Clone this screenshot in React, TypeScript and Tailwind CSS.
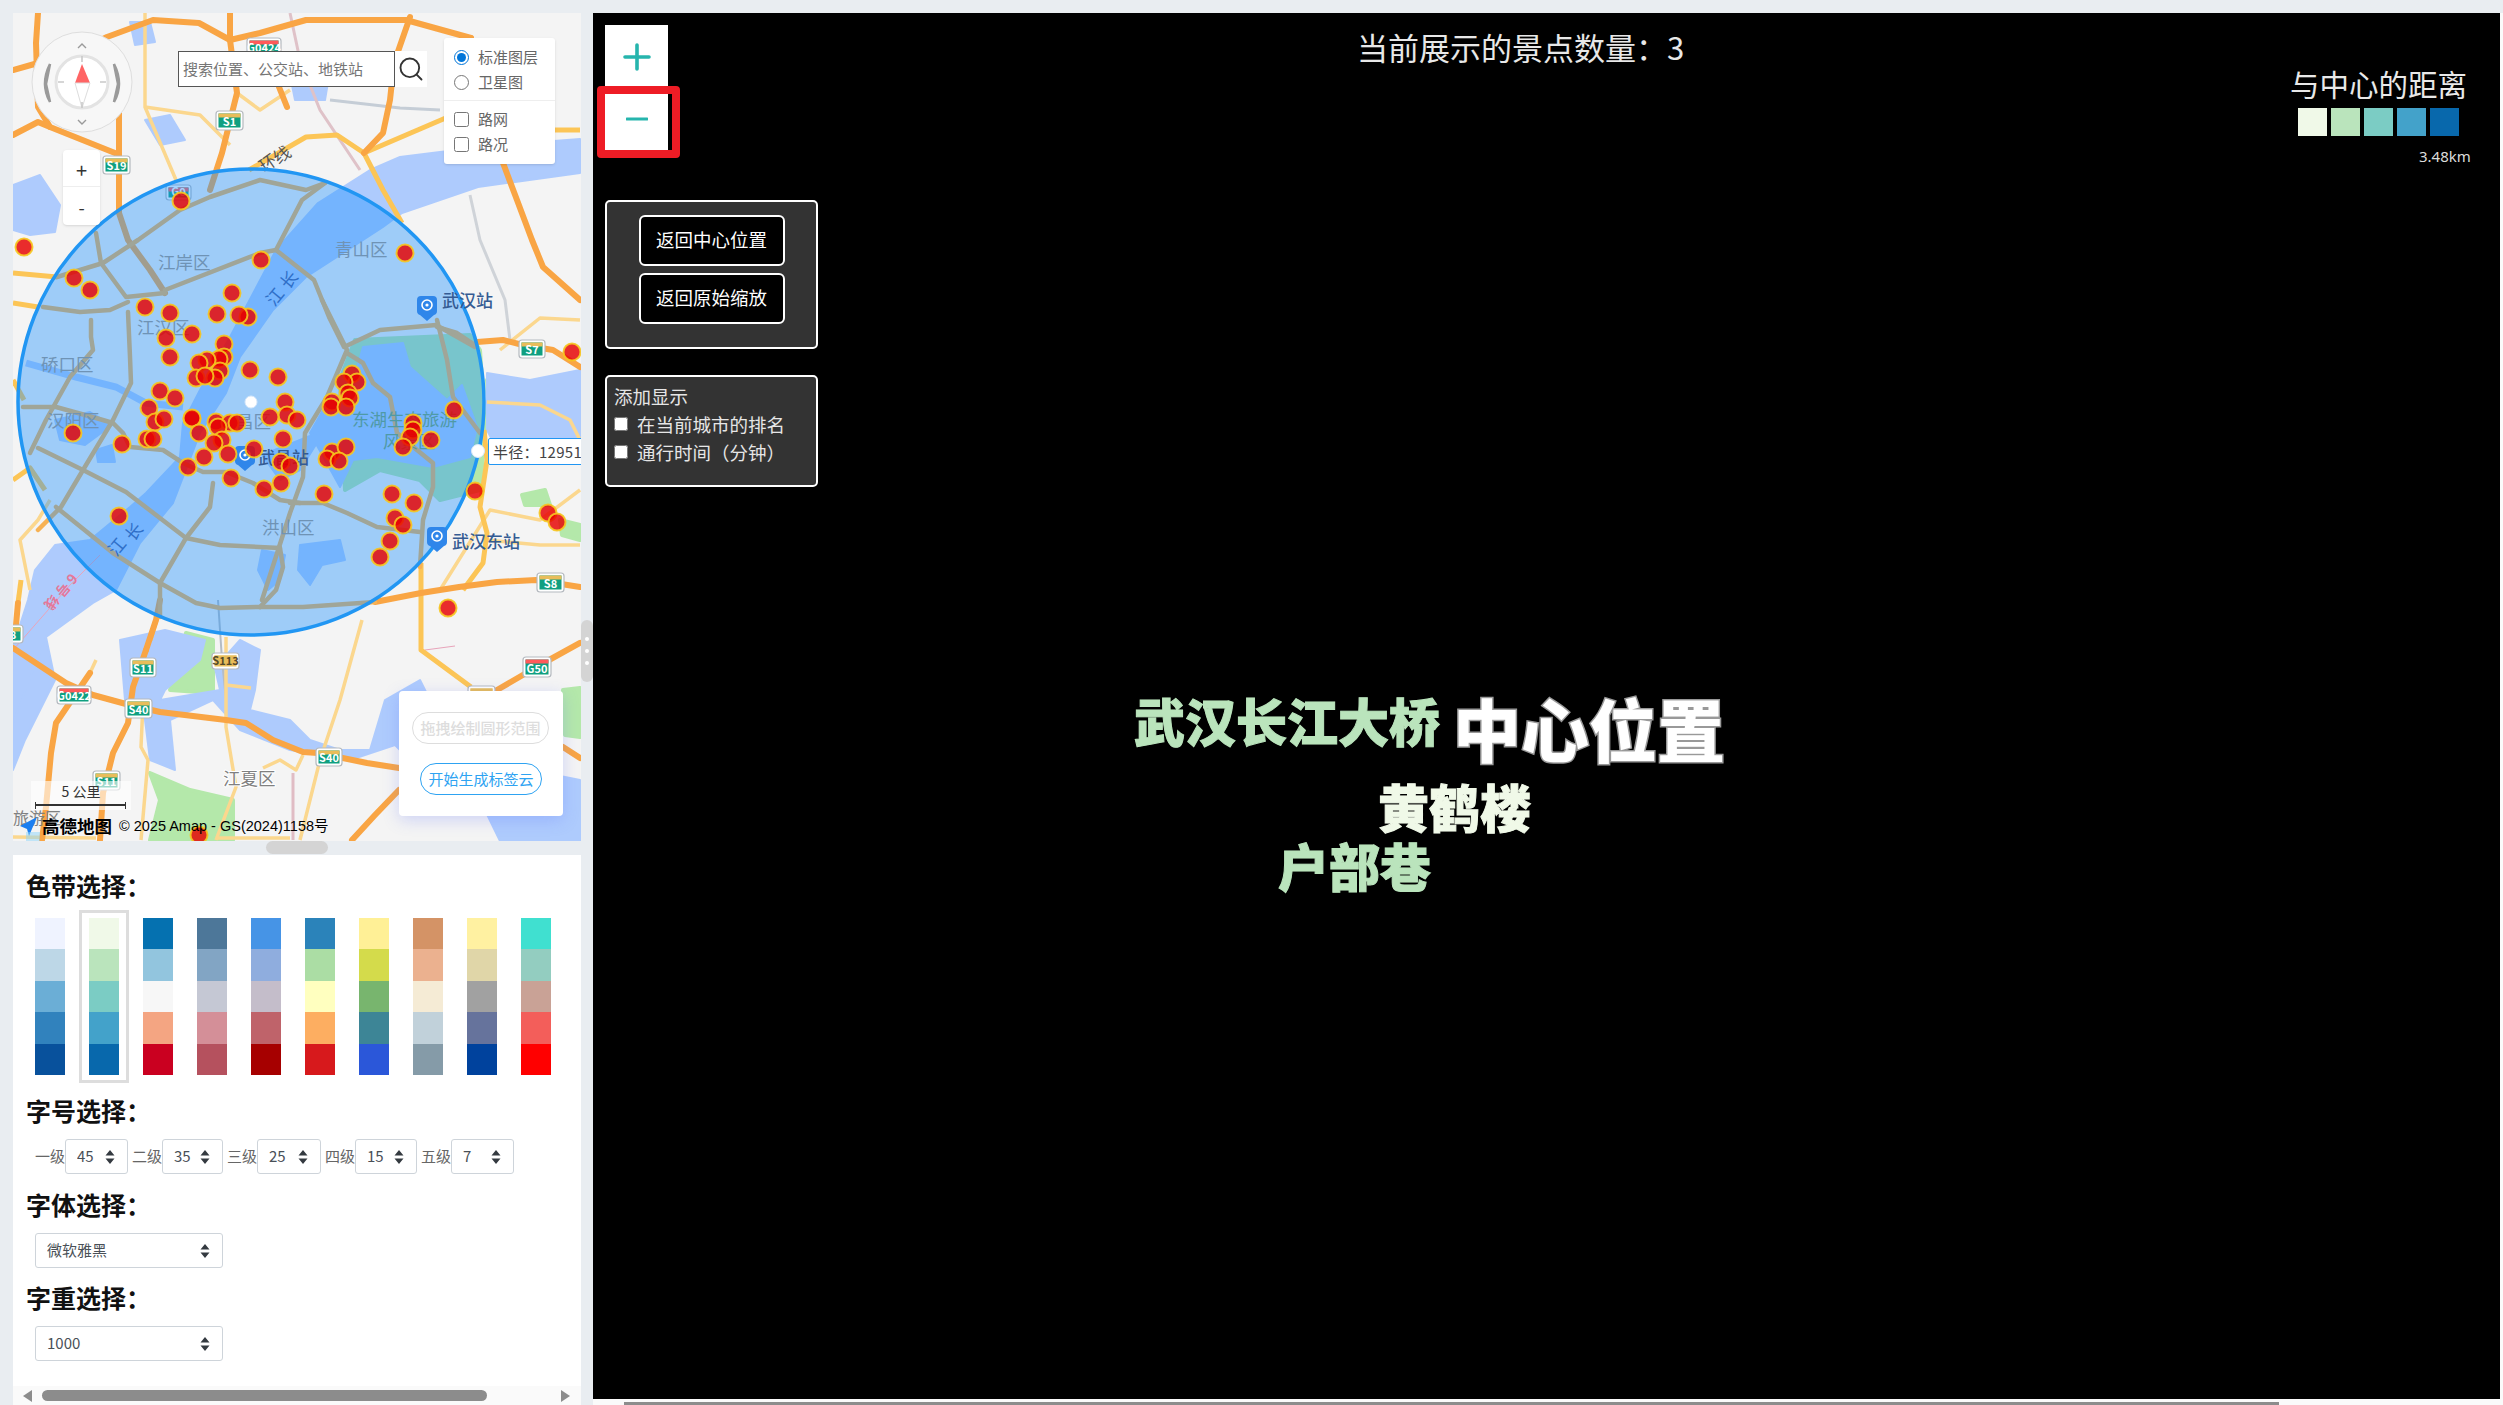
import { Search } from "lucide-react";

const highways = [
  "13,70 38,63 60,56",
  "38,13 36,43 38,107 50,127 115,153",
  "13,135 38,122 50,127",
  "60,60 107,37 153,20 199,23 230,40 260,33 306,20 406,20 471,38",
  "119,100 119,213 128,240 150,270 165,293",
  "230,13 230,40 237,93 222,153 210,190",
  "410,17 394,63 390,100 383,133 364,153",
  "279,87 287,107",
  "471,38 497,147 517,200 532,240 543,267 580,300",
  "477,342 503,340 523,345 553,350 580,367",
  "375,602 421,593 459,587 497,582 536,580 580,587",
  "497,690 540,665 580,643",
  "563,747 580,758",
  "13,648 66,683 93,695 126,704 160,712 226,720 246,723 273,740 303,752 318,753 367,763 399,768",
  "90,673 56,723 51,753 46,807 42,840",
  "146,650 156,620 160,600",
  "146,650 133,687 128,723 113,753 103,793 100,840",
  "18,603 16,625",
  "399,790 375,815 352,840",
];

// ring roads, seen through the radius circle
const cityRoads = [
  "57,277 103,263 138,240 180,210 210,197 260,180 306,190 325,183",
  "165,290 260,253 276,250 314,280 329,317 344,347 380,330 436,325 475,347",
  "276,250 302,200 325,183",
  "96,233 101,263 126,297 165,293",
  "43,307 80,312 110,310 128,302",
  "128,312 130,357 131,383 113,420 83,470 61,507 38,530",
  "23,407 56,407 96,418 113,423 123,433 130,447 163,450 183,463 203,472 226,472 253,483 280,500 300,503",
  "38,448 83,470 126,492 186,538 220,545 280,548",
  "56,507 113,553 160,583 196,603 220,608 256,607 303,607 375,602",
  "213,483 210,507 186,538 160,583 160,617",
  "280,548 283,567 276,590 260,607",
  "91,320 91,337 93,350 70,377 46,420 30,453",
  "347,353 363,363 373,383 390,397 397,433 417,450 433,463 433,487 423,520 420,567",
  "290,503 323,503 347,513 377,527 420,532",
  "437,320 447,360 453,397 480,433",
  "437,327 457,333 475,345",
  "322,300 347,350 327,397 305,433 303,477 290,513 262,600",
];

const yellows = [
  "249,170 306,137 337,135 364,153 383,190 402,223",
  "364,153 448,117 520,130 580,130",
  "13,273 57,277",
  "13,303 38,307",
  "484,430 487,460 480,507 487,533 483,563 463,590",
  "421,563 421,650 471,687",
  "21,580 18,603",
  "156,620 150,640",
  "13,380 24,400",
  "13,480 30,468 45,490",
];

const pales = [
  "145,13 145,107 176,180",
  "145,107 200,115 230,145",
  "237,93 260,110 290,90",
  "90,673 96,660",
  "143,703 141,747 148,760 141,840",
  "226,637 226,727 236,787 216,840",
  "226,685 251,688",
  "303,755 296,770 280,760 263,768",
  "13,837 96,838",
  "216,838 290,838",
  "500,350 540,318 580,320",
  "487,402 540,405 570,420 580,440",
  "440,590 490,510 540,520 580,490",
  "487,540 540,545 580,545",
  "30,590 20,540 38,520 50,500",
  "362,620 340,700 320,760 300,840",
];

const waters = [
  // Yangtze, top right to bottom left
  "580,139 500,145 440,152 400,157 370,170 318,203 276,250 230,337 200,390 183,423 180,457 146,493 130,507 90,540 55,545 35,570 28,600 20,625 13,640 13,723 33,670 46,637 93,603 116,590 140,543 173,503 200,433 226,393 240,357 273,310 306,277 383,227 402,213 478,187 580,173",
  // East Lake
  "363,347 403,343 410,367 447,400 462,385 477,427 470,457 433,467 377,457 353,460 340,487 310,433 323,410 353,383",
  // south lakes
  "165,630 205,640 200,660 165,690 160,700 220,690 215,668 240,640 260,650 255,690 250,710 290,720 310,740 340,750 370,750 385,700 420,680 440,720 468,760 420,770 395,745 350,760 290,750 240,730 213,700 170,720 175,770 150,760 145,720 125,700 120,640",
  "13,723 33,670 46,637 55,680 25,740 13,770",
  "480,800 530,770 580,780 580,841 500,841",
  "300,545 340,540 345,560 322,565 310,585 298,570",
  "262,550 285,555 280,580 268,590 258,570",
  // upper lakes and ponds
  "13,185 40,175 60,205 55,232 30,235 13,230",
  "145,120 170,115 185,140 160,145",
  "130,22 150,22 155,42 135,45",
  "290,75 330,70 325,100 295,100",
  "55,420 90,412 112,425 85,445 60,440",
  "96,450 112,445 115,462 98,462",
  "300,440 325,430 300,470 280,480 262,455",
  "487,373 530,380 580,370 580,450 540,440 500,455 487,430",
];

const greens = [
  "355,340 470,335 480,350 485,430 480,490 440,500 420,480 380,470 345,490 340,380",
  "150,773 190,790 233,800 233,840 150,840 160,800",
  "186,633 213,640 213,693 170,690",
  "563,690 580,688 580,737 565,735",
  "487,380 517,385 520,420 490,430",
  "522,495 545,490 550,505 525,505",
  "560,520 580,525 580,540 562,535",
];

const markers = [
  [181,201],[24,247],[261,260],[405,253],[74,278],[90,290],[232,293],[145,307],[170,313],[217,314],[248,317],[239,315],
  [166,338],[192,334],[224,344],[170,357],[572,352],[224,357],[219,359],[207,360],[199,363],[220,371],[196,378],[215,378],[205,376],
  [250,370],[278,377],[352,374],[357,382],[344,382],[348,393],[350,398],[332,402],[331,407],[346,407],[454,410],
  [285,402],[287,415],[297,420],[270,417],[160,391],[175,398],[149,408],[155,422],[164,419],[192,419],[192,418],
  [216,422],[230,423],[218,427],[237,423],[413,423],[413,430],[73,433],[122,444],[147,439],[153,439],[199,433],[222,440],[214,443],
  [228,454],[204,457],[254,449],[283,439],[281,462],[290,466],[188,467],[231,478],[264,489],[281,483],[324,494],[332,452],[346,447],
  [327,459],[339,461],[410,437],[403,447],[431,440],[392,494],[414,503],[395,518],[403,525],[390,541],[380,557],[475,491],[119,516],
  [448,608],[548,513],[557,522],[199,835],
];

const grayLabels = [
  { t: "江岸区", x: 158, y: 263 }, { t: "青山区", x: 335, y: 250 }, { t: "江汉区", x: 137, y: 328 },
  { t: "硚口区", x: 41, y: 365 }, { t: "汉阳区", x: 47, y: 421 }, { t: "洪山区", x: 262, y: 528 },
];

const palettes = [
  ["#eff3ff", "#bdd7e7", "#6baed6", "#3182bd", "#08519c"],
  ["#f0f9e8", "#bae4bc", "#7bccc4", "#43a2ca", "#0868ac"],
  ["#0571b0", "#92c5de", "#f7f7f7", "#f4a582", "#ca0020"],
  ["#4d7799", "#82a5c4", "#c5c8d4", "#d48f98", "#b5515e"],
  ["#4694e6", "#8fadde", "#c4bdca", "#bf636a", "#a60000"],
  ["#2b83ba", "#abdda4", "#ffffbf", "#fdae61", "#d7191c"],
  ["#fff096", "#d4db4b", "#78b56e", "#3d8596", "#2b57d9"],
  ["#d49366", "#ebb18f", "#f5ebd5", "#c1d1da", "#859ba8"],
  ["#fff1a1", "#e0d6a8", "#a1a1a1", "#66739c", "#00429d"],
  ["#40e0d0", "#93cdc0", "#c9a296", "#f35e5a", "#ff0000"],
];

const legend = ["#f0f9e8", "#bae4bc", "#7bccc4", "#43a2ca", "#0868ac"];

const sizes = [
  { label: "一级", value: "45", cls: "w-[63px]" },
  { label: "二级", value: "35", cls: "w-[61px]" },
  { label: "三级", value: "25", cls: "w-[64px]" },
  { label: "四级", value: "15", cls: "w-[62px]" },
  { label: "五级", value: "7", cls: "w-[63px]" },
];

function Shield({ x, y, w, h, label, kind }: { x: number; y: number; w: number; h: number; label: string; kind: "s" | "g" | "y" }) {
  const band = kind === "g" ? "#ff5a5a" : "#e8bd5a";
  const body = kind === "y" ? "#e8bd5a" : "#0f9f80";
  return (
    <g>
      <rect x={x} y={y} width={w} height={h} rx={3} fill="#ffffff" stroke="#b4b9bf" strokeWidth={1.2} />
      <rect x={x + 2.5} y={y + 2.5} width={w - 5} height={h - 5} fill={body} />
      <rect x={x + 2.5} y={y + 2.5} width={w - 5} height={4} fill={band} />
      <text x={x + w / 2} y={y + h - 4.5} textAnchor="middle" fontSize={11} fontWeight={700} fill={kind === "y" ? "#554a2a" : "#ffffff"}>
        {label}
      </text>
    </g>
  );
}

function Pin({ x, y }: { x: number; y: number }) {
  return (
    <g transform={`translate(${x} ${y})`}>
      <path d="M-10,-7 Q-10,-11 -6,-11 L6,-11 Q10,-11 10,-7 L10,4 Q10,7 7,8 L0,14 L-7,8 Q-10,7 -10,4 Z" fill="#2f86ea" />
      <circle cx={0} cy={-2} r={5} fill="none" stroke="#ffffff" strokeWidth={1.6} />
      <circle cx={0} cy={-2} r={1.6} fill="#ffffff" />
    </g>
  );
}

function Compass() {
  return (
    <g>
      <circle cx={82} cy={82} r={50} fill="#f7f7f7" stroke="#dedede" />
      <circle cx={82} cy={82} r={26} fill="#ffffff" stroke="#e3e3e3" strokeWidth={3} />
      <path d="M82,64 L90,83 L75,83 Z" fill="#ff6464" />
      <path d="M82,108 L90,83 L75,83 Z" fill="#ffffff" stroke="#dddddd" />
      <path d="M50,64 Q40,84 50,102 L46,84 Z M114,64 Q124,84 114,102 L118,84 Z" fill="#9a9a9a" stroke="#9a9a9a" strokeWidth={2.5} />
      <path d="M78,48 L82,44 L86,48 M78,120 L82,124 L86,120" fill="none" stroke="#9a9a9a" strokeWidth={1.4} />
      <path d="M82,56 L82,62 M82,102 L82,108 M58,82 L64,82 M100,82 L106,82" stroke="#c9c9c9" strokeWidth={1.6} />
    </g>
  );
}

function MapDrawing() {
  return (
    <svg viewBox="13 13 568 828" width={568} height={828} className="block">
      <rect x={13} y={13} width={568} height={828} fill="#f4f4f4" />
      {greens.map((p) => (
        <polygon key={p} points={p} fill="#b4e8aa" stroke="#b4e8aa" strokeWidth={4} strokeLinejoin="round" />
      ))}
      {waters.map((p) => (
        <polygon key={p} points={p} fill="#aecbfd" stroke="#aecbfd" strokeWidth={2} strokeLinejoin="round" />
      ))}
      <polyline points="26,363 76,377 116,387 146,403 183,407" fill="none" stroke="#aecbfd" strokeWidth={7} />
      {/* rail and thin lines */}
      <polyline points="290,13 300,60 320,110 360,170" fill="none" stroke="#dfc2c8" strokeWidth={3} />
      <polyline points="330,100 400,108 440,110" fill="none" stroke="#c5cdd6" strokeWidth={3} />
      <polyline points="470,195 480,240 505,300 510,340" fill="none" stroke="#cfd3d8" strokeWidth={3} />
      <polyline points="218,600 222,660 226,700" fill="none" stroke="#b5bcc4" strokeWidth={2} />
      <polyline points="293,773 293,840" fill="none" stroke="#e0bcc4" strokeWidth={3} />
      <polyline points="13,650 70,585 100,555" fill="none" stroke="#e8a4ba" strokeWidth={1} />
      <polyline points="425,650 455,646" fill="none" stroke="#e8a4ba" strokeWidth={1} />
      {pales.map((p) => (
        <polyline key={p} points={p} fill="none" stroke="#fbd78e" strokeWidth={3.5} strokeLinejoin="round" />
      ))}
      {yellows.map((p) => (
        <polyline key={p} points={p} fill="none" stroke="#fcc556" strokeWidth={5} strokeLinejoin="round" />
      ))}
      {highways.map((p) => (
        <polyline key={p} points={p} fill="none" stroke="#f9a544" strokeWidth={6} strokeLinejoin="round" strokeLinecap="round" />
      ))}
      {cityRoads.map((p) => (
        <polyline key={p} points={p} fill="none" stroke="#f7b254" strokeWidth={4.5} strokeLinejoin="round" strokeLinecap="round" />
      ))}

      <Shield x={247} y={38} w={34} h={18} label="G0424" kind="g" />
      <Shield x={216} y={111} w={27} h={19} label="S1" kind="s" />
      <Shield x={103} y={156} w={27} h={18} label="S19" kind="s" />
      <Shield x={166} y={185} w={25} h={15} label="G0" kind="g" />
      <Shield x={519} y={340} w={26} h={18} label="S7" kind="s" />
      <Shield x={537} y={573} w={27} h={19} label="S8" kind="s" />
      <Shield x={212} y={653} w={27} h={16} label="S113" kind="y" />
      <Shield x={130} y={658} w={26} h={19} label="S11" kind="s" />
      <Shield x={57} y={686} w={34} h={18} label="G0422" kind="g" />
      <Shield x={125} y={699} w={27} h={19} label="S40" kind="s" />
      <Shield x={93} y={771} w={27} h={19} label="S11" kind="s" />
      <Shield x={523} y={657} w={28} h={20} label="G50" kind="g" />
      <Shield x={316} y={748} w={26} h={18} label="S40" kind="s" />
      <Shield x={-4} y={625} w={27} h={18} label="S8" kind="s" />
      <Shield x={468} y={686} w={27} h={18} label="" kind="y" />

      <g fill="#555" fontSize={17}>
        <text x={268} y={169} textAnchor="middle" transform="rotate(-35 268 163)">环</text>
        <text x={282} y={161} textAnchor="middle" transform="rotate(-35 282 155)">线</text>
      </g>
      <text x={60} y={598} fontSize={14} letterSpacing={3} fill="#e4789a" textAnchor="middle" transform="rotate(130 60 593)" fontWeight={700}>6号线</text>
      <text x={223} y={785} fontSize={17.5} fill="#808080" stroke="#ffffff" strokeWidth={2} paintOrder="stroke">江夏区</text>
      <text x={13} y={824} fontSize={16} fill="#808080">旅游区</text>

      <circle cx={251} cy={402} r={233} fill="#1e90ff" fillOpacity={0.4} stroke="#2196f3" strokeWidth={3.5} />

      {grayLabels.map((l) => (
        <text key={l.t} x={l.x} y={l.y + 6} fontSize={17.5} fill="#6f93b5">{l.t}</text>
      ))}
      <text x={352} y={426} fontSize={17.5} fill="#4f9aa6">东湖生态旅游</text>
      <text x={383} y={448} fontSize={17.5} fill="#4f9aa6">风景区</text>
      <text x={236} y={428} fontSize={17.5} fill="#6f93b5">昌区</text>
      <text x={275} y={303} fontSize={17} fill="#2f6fc8" textAnchor="middle" transform="rotate(-50 275 297)">江</text>
      <text x={289} y={286} fontSize={17} fill="#2f6fc8" textAnchor="middle" transform="rotate(-50 289 280)">长</text>
      <text x={117} y={553} fontSize={17} fill="#2f6fc8" textAnchor="middle" transform="rotate(-50 117 547)">江</text>
      <text x={134} y={538} fontSize={17} fill="#2f6fc8" textAnchor="middle" transform="rotate(-50 134 532)">长</text>

      <Pin x={427} y={307} />
      <text x={442} y={307} fontSize={17} fontWeight={500} fill="#345b93">武汉站</text>
      <Pin x={245} y={457} />
      <text x={258} y={464} fontSize={17} fontWeight={500} fill="#345b93">武昌站</text>
      <Pin x={437} y={538} />
      <text x={452} y={548} fontSize={17} fontWeight={500} fill="#345b93">武汉东站</text>

      {markers.map(([x, y], i) => (
        <circle key={i} cx={x} cy={y} r={8.5} fill="#e60000" fillOpacity={0.82} stroke="#f6c820" strokeOpacity={0.9} strokeWidth={2} />
      ))}

      <circle cx={251} cy={402} r={6} fill="#ffffff" stroke="#d8e8fa" />
      <circle cx={478} cy={451} r={6.5} fill="#ffffff" stroke="#d8e8fa" />

      <Compass />

      <path d="M37,817 L20,826 L27,829 L29,836 Z" fill="#1c7ff0" />
      <rect x={26} y={832} width={14} height={9} fill="#8bd4fa" fillOpacity={0.5} />
    </svg>
  );
}

function Arrows() {
  return (
    <svg width="10" height="14" viewBox="0 0 10 14" className="absolute right-[13px] top-1/2 -translate-y-1/2 pointer-events-none">
      <path d="M5,0 L9.5,5.5 L0.5,5.5 Z M5,14 L9.5,8.5 L0.5,8.5 Z" fill="#343a40" />
    </svg>
  );
}

function Select({ value, cls }: { value: string; cls: string }) {
  return (
    <div className={`relative ${cls}`}>
      <select
        defaultValue={value}
        className="w-full h-[35px] appearance-none bg-white border border-[#ced4da] rounded-[3px] pl-[11px] text-[15px] text-[#495057] outline-none"
      >
        <option value={value}>{value}</option>
      </select>
      <Arrows />
    </div>
  );
}

function Heading({ children, cls }: { children: string; cls: string }) {
  return <div className={`h-[32px] leading-[32px] pl-[13px] text-[25px] font-bold text-[#111] ${cls}`}>{children}</div>;
}

function MapPanel() {
  return (
    <div className="relative w-[568px] h-[828px] overflow-hidden">
      <MapDrawing />

      {/* search */}
      <div className="absolute left-[165px] top-[38px] flex h-[36px]">
        <div className="w-[217px] h-[36px] bg-white border border-[#555] pl-[4px] text-[15px] leading-[34px] text-[#757575]">
          搜索位置、公交站、地铁站
        </div>
        <div className="w-[32px] h-[36px] bg-white flex items-center justify-center">
          <Search className="w-[28px] h-[28px] text-[#333]" strokeWidth={1.6} />
        </div>
      </div>

      {/* layer switch */}
      <div className="absolute left-[431px] top-[25px] w-[111px] h-[126px] bg-white rounded-[3px] shadow-sm text-[15px] text-[#666]">
        <label className="absolute left-[10px] top-[10px] flex items-center gap-[9px] h-[18px] leading-[18px]">
          <input type="radio" name="layer" defaultChecked className="w-[15px] h-[15px] m-0 accent-[#0075d9]" />
          标准图层
        </label>
        <label className="absolute left-[10px] top-[35px] flex items-center gap-[9px] h-[18px] leading-[18px]">
          <input type="radio" name="layer" className="w-[15px] h-[15px] m-0" />
          卫星图
        </label>
        <div className="absolute left-0 right-0 top-[62px] h-px bg-[#eeeeee]" />
        <label className="absolute left-[10px] top-[72px] flex items-center gap-[9px] h-[18px] leading-[18px]">
          <input type="checkbox" className="w-[15px] h-[15px] m-0" />
          路网
        </label>
        <label className="absolute left-[10px] top-[97px] flex items-center gap-[9px] h-[18px] leading-[18px]">
          <input type="checkbox" className="w-[15px] h-[15px] m-0" />
          路况
        </label>
      </div>

      {/* zoom */}
      <div className="absolute left-[50px] top-[137px] w-[37px] h-[75px] bg-white rounded-[4px] shadow-sm flex flex-col text-[#333]">
        <div className="h-[37px] flex items-center justify-center border-b border-[#eeeeee] pt-[3px] text-[20px] leading-none">+</div>
        <div className="h-[38px] flex items-center justify-center pt-[1px] text-[18px] leading-none">-</div>
      </div>

      {/* radius */}
      <div className="absolute left-[475px] top-[425px] w-[110px] h-[27px] bg-white border border-[#2196f3] rounded-[2px] pl-[4px] text-[15px] tracking-[0.3px] leading-[25px] text-[#444] whitespace-nowrap">
        半径：12951米
      </div>

      {/* draw card */}
      <div className="absolute left-[386px] top-[678px] w-[164px] h-[125px] bg-white rounded-[4px] shadow-[0_4px_16px_rgba(90,110,250,0.25)]">
        <div className="absolute left-[13px] top-[21px] w-[137px] h-[32px] rounded-full border border-[#dddddd] text-center text-[15px] leading-[30px] font-medium text-[#dddddd]">
          拖拽绘制圆形范围
        </div>
        <div className="absolute left-[21px] top-[72px] w-[122px] h-[32px] rounded-full border border-[#2ea3f2] text-center text-[15px] leading-[30px] text-[#2ea3f2]">
          开始生成标签云
        </div>
      </div>

      {/* scale */}
      <div className="absolute left-[18px] top-[768px] w-[100px] h-[29px] bg-white/60 text-center text-[14px] leading-[20px] text-[#333]">
        5 公里
        <div className="absolute left-[4px] top-[21px] w-[91px] h-[7px] border-x border-[#333]">
          <div className="mt-[2px] h-[2px] bg-[#333]" />
        </div>
      </div>

      {/* logo */}
      <div className="absolute left-[29px] top-[802px] flex items-center h-[22px] whitespace-nowrap text-black">
        <span className="text-[17.5px] font-bold leading-[22px]">高德地图</span>
        <span className="ml-[7px] text-[14.5px] leading-[22px] font-['Liberation_Sans','Noto_Sans_CJK_SC',sans-serif]">© 2025 Amap - GS(2024)1158号</span>
      </div>
    </div>
  );
}

function StylePanel() {
  return (
    <div className="relative flex-1 w-[568px] bg-white flex flex-col">
      <Heading cls="mt-[14px]">色带选择：</Heading>
      <div className="mt-[9px] ml-[12px] flex gap-[4px]">
        {palettes.map((colors, i) => (
          <div
            key={i}
            className={i === 1 ? "w-[50px] h-[173px] border-[3px] border-[#dddddd] px-[7px] py-[5px]" : "w-[50px] h-[173px] border-[3px] border-transparent px-[7px] py-[5px]"}
          >
            {colors.map((c) => (
              <div key={c} className="h-[31.4px]" style={{ backgroundColor: c }} />
            ))}
          </div>
        ))}
      </div>

      <Heading cls="mt-[11px]">字号选择：</Heading>
      <div className="mt-[13px] ml-[22px] flex items-center gap-[4px]">
        {sizes.map((s) => (
          <div key={s.label} className="flex items-center">
            <span className="w-[30px] text-[15px] text-[#666] whitespace-nowrap">{s.label}</span>
            <Select value={s.value} cls={s.cls} />
          </div>
        ))}
      </div>

      <Heading cls="mt-[14px]">字体选择：</Heading>
      <div className="mt-[13px] ml-[22px]">
        <Select value="微软雅黑" cls="w-[188px]" />
      </div>

      <Heading cls="mt-[13px]">字重选择：</Heading>
      <div className="mt-[13px] ml-[22px]">
        <Select value="1000" cls="w-[188px]" />
      </div>

      <div className="mt-auto h-[19px] bg-[#fafafa] flex items-center pl-[10px]">
        <svg width="9" height="12" viewBox="0 0 9 12"><path d="M9,0 L9,12 L0,6 Z" fill="#8c8c8c" /></svg>
        <div className="ml-[10px] w-[445px] h-[11px] rounded-full bg-[#8c8c8c]" />
        <svg className="ml-[74px]" width="9" height="12" viewBox="0 0 9 12"><path d="M0,0 L0,12 L9,6 Z" fill="#8c8c8c" /></svg>
      </div>
    </div>
  );
}

function Canvas() {
  return (
    <div className="relative w-[1907px] h-[1386px] bg-black overflow-hidden text-white">
      <div className="pt-[12px] pl-[12px] w-[224px]">
        <div className="w-[63px] h-[70px] pb-[6px] bg-white flex items-center justify-center">
          <svg width="28" height="28" viewBox="0 0 28 28"><path d="M14,2 L14,26 M2,14 L26,14" stroke="#26b5ad" strokeWidth="3.6" strokeLinecap="round" /></svg>
        </div>
        <div className="w-[63px] h-[55px] pb-[8px] bg-white flex items-center justify-center">
          <svg width="22" height="4" viewBox="0 0 22 4"><path d="M1,2 L21,2" stroke="#26b5ad" strokeWidth="3" strokeLinecap="round" /></svg>
        </div>

        <div className="mt-[50px] w-[213px] h-[149px] bg-[#333333] border-2 border-white rounded-[5px] pt-[13px] flex flex-col items-center gap-[7px]">
          <div className="w-[146px] h-[51px] bg-black border-2 border-white rounded-[6px] text-center text-[18.5px] leading-[45px] text-white">返回中心位置</div>
          <div className="w-[146px] h-[51px] bg-black border-2 border-white rounded-[6px] text-center text-[18.5px] leading-[45px] text-white">返回原始缩放</div>
        </div>

        <div className="mt-[26px] w-[213px] h-[112px] bg-[#333333] border-2 border-white rounded-[5px] pl-[7px] pt-[5px] text-[18.5px] leading-[28px] text-[#e6e6e6]">
          <div>添加显示</div>
          <label className="flex items-center gap-[9px]">
            <input type="checkbox" className="w-[14px] h-[14px] m-0" />
            在当前城市的排名
          </label>
          <label className="flex items-center gap-[9px]">
            <input type="checkbox" className="w-[14px] h-[14px] m-0" />
            通行时间（分钟）
          </label>
        </div>
      </div>

      {/* highlight round the minus button */}
      <div className="absolute left-[4px] top-[73px] w-[83px] h-[72px] border-[8px] border-[#ee1c25] rounded-[4px]" />

      <div className="absolute left-[764px] top-[12px] text-[31px] leading-[44px] text-[#e8e8e8] whitespace-nowrap">当前展示的景点数量：3</div>

      {/* legend */}
      <div className="absolute left-[1697px] top-[52px] text-[29.5px] leading-[36px] text-[#e8e8e8] whitespace-nowrap">与中心的距离</div>
      <div className="absolute left-[1705px] top-[95px] flex gap-[4px]">
        {legend.map((c) => (
          <div key={c} className="w-[29px] h-[28px]" style={{ backgroundColor: c }} />
        ))}
      </div>
      <div className="absolute left-[1826px] top-[133px] text-[15px] leading-[20px] text-[#dcdcdc] font-['Noto_Sans',sans-serif]">3.48km</div>

      {/* word cloud */}
      <div className="absolute left-[541px] top-[672px] text-[51px] leading-[70px] font-black text-[#bae4bc] whitespace-nowrap [-webkit-text-stroke:1px_#bae4bc]">武汉长江大桥</div>
      <div className="absolute left-[860px] top-[667px] text-[68px] leading-[96px] font-black text-white whitespace-nowrap [-webkit-text-stroke:3px_#999999] [paint-order:stroke_fill]">中心位置</div>
      <div className="absolute left-[785px] top-[758px] text-[51px] leading-[70px] font-black text-[#f0f9e8] whitespace-nowrap [-webkit-text-stroke:1px_#f0f9e8]">黄鹤楼</div>
      <div className="absolute left-[685px] top-[817px] text-[51px] leading-[70px] font-black text-[#bae4bc] whitespace-nowrap [-webkit-text-stroke:1px_#bae4bc]">户部巷</div>
    </div>
  );
}

export default function App() {
  return (
    <div className="relative w-[2503px] h-[1405px] overflow-hidden bg-[#e9edf1] font-['Noto_Sans_CJK_SC','Noto_Sans',sans-serif]">
      <div className="flex pl-[13px] pt-[13px] h-full">
        <div className="w-[568px] flex flex-col h-full">
          <MapPanel />
          <div className="h-[14px] shrink-0 flex justify-center">
            <div className="w-[62px] h-[13px] rounded-full bg-[#d4d4d4]" />
          </div>
          <StylePanel />
        </div>

        <div className="relative w-[12px] shrink-0">
          <div className="absolute left-0 top-[607px] w-[12px] h-[62px] rounded-full bg-[#d4d4d4] flex flex-col items-center justify-center gap-[8px]">
            <div className="w-[4px] h-[4px] rounded-full bg-white" />
            <div className="w-[4px] h-[4px] rounded-full bg-white" />
            <div className="w-[4px] h-[4px] rounded-full bg-white" />
          </div>
        </div>

        <div className="flex flex-col">
          <Canvas />
          <div className="h-[6px] bg-[#fafafa] pl-[31px]">
            <div className="w-[1655px] h-[6px] mt-[3px] bg-[#8c8c8c]" />
          </div>
        </div>
        <div className="w-[3px] bg-[#fafafa]" />
      </div>
    </div>
  );
}
